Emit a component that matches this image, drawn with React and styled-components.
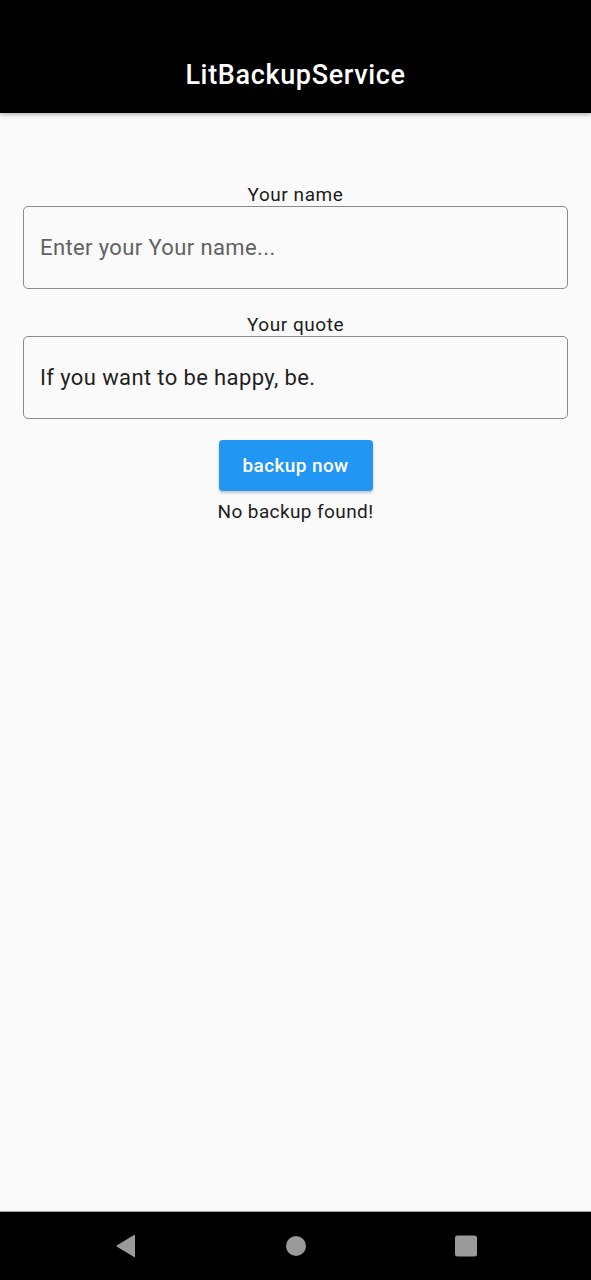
import React, { useState } from "react";
import styled, { createGlobalStyle } from "styled-components";

const GlobalStyle = createGlobalStyle`
  html, body {
    margin: 0;
    padding: 0;
    background: #fafafa;
    font-family: Roboto, "Liberation Sans", sans-serif;
  }
  * {
    box-sizing: border-box;
  }
`;

const App = () => {
  const [name, setName] = useState("");
  const [quote, setQuote] = useState("If you want to be happy, be.");

  return (
    <Screen>
      <GlobalStyle />
      <AppBar>
        <Title>LitBackupService</Title>
      </AppBar>
      <Content>
        <Field>
          <Label>Your name</Label>
          <Input
            value={name}
            onChange={(e) => setName(e.target.value)}
            placeholder="Enter your Your name..."
          />
        </Field>
        <Field>
          <Label>Your quote</Label>
          <Input value={quote} onChange={(e) => setQuote(e.target.value)} />
        </Field>
        <BackupButton>backup now</BackupButton>
        <Status>No backup found!</Status>
      </Content>
      <NavBar>
        <NavSlot>
          <svg width="22" height="24" viewBox="0 0 22 24">
            <path
              d="M20 1.5 L20 22.5 Q20 23.5 19 23 L2 12.8 Q1 12 2 11.2 L19 1 Q20 0.5 20 1.5 Z"
              fill="#9a9a9a"
            />
          </svg>
        </NavSlot>
        <NavSlot>
          <svg width="22" height="22" viewBox="0 0 22 22">
            <circle cx="11" cy="11" r="10" fill="#9a9a9a" />
          </svg>
        </NavSlot>
        <NavSlot>
          <svg width="22" height="22" viewBox="0 0 22 22">
            <rect x="0" y="0.5" width="22" height="21" rx="2.5" fill="#9a9a9a" />
          </svg>
        </NavSlot>
      </NavBar>
    </Screen>
  );
};

const Screen = styled.div`
  min-height: 100vh;
  display: flex;
  flex-direction: column;
`;

const AppBar = styled.header`
  height: 113px;
  background: #000;
  display: flex;
  align-items: flex-end;
  justify-content: center;
  padding-bottom: 22px;
  box-shadow: 0 2px 4px rgba(0, 0, 0, 0.25);
  position: relative;
  z-index: 1;
`;

const Title = styled.h1`
  margin: 0;
  color: #fff;
  font-size: 27px;
  font-weight: 500;
  letter-spacing: 0.65px;
  line-height: 32px;
`;

const Content = styled.main`
  flex: 1;
  display: flex;
  flex-direction: column;
  align-items: center;
  padding: 71px 23px 0;
`;

const Field = styled.div`
  width: 100%;
  display: flex;
  flex-direction: column;
  align-items: center;
  margin-bottom: 25px;

  & + & {
    margin-bottom: 21px;
  }
`;

const Label = styled.label`
  font-size: 19px;
  line-height: 22px;
  letter-spacing: 0.55px;
  color: #1c1c1c;
`;

const Input = styled.input`
  width: 100%;
  height: 83px;
  border: 1px solid #8a8a8a;
  border-radius: 5px;
  background: transparent;
  padding: 0 16px;
  font-family: Roboto, "Liberation Sans", sans-serif;
  font-size: 22px;
  letter-spacing: 0.38px;
  color: #1f1f1f;
  outline: none;

  &::placeholder {
    color: #616161;
  }
`;

const BackupButton = styled.button`
  width: 154px;
  height: 51px;
  border: none;
  border-radius: 4px;
  background: #2196f3;
  color: #fff;
  font-family: Roboto, "Liberation Sans", sans-serif;
  font-size: 19px;
  font-weight: 500;
  letter-spacing: 0.4px;
  box-shadow: 0 2px 3px rgba(0, 0, 0, 0.22);
  cursor: pointer;
`;

const Status = styled.p`
  margin: 10px 0 0;
  font-size: 19px;
  line-height: 22px;
  letter-spacing: 0.4px;
  color: #1c1c1c;
`;

const NavBar = styled.nav`
  height: 69px;
  background: #000;
  border-top: 1px solid #9e9e9e;
  display: flex;
  align-items: center;
  justify-content: center;
  gap: 70px;
`;

const NavSlot = styled.div`
  width: 100px;
  display: flex;
  justify-content: center;
  align-items: center;
`;

export default App;
